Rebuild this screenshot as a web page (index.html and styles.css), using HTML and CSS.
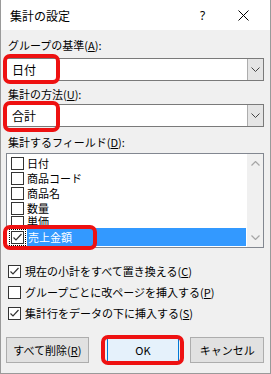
FILE: index.html
```html
<!DOCTYPE html>
<html lang="ja">
<head>
	<meta charset="UTF-8">
	<meta name="viewport" content="width=device-width, initial-scale=1.0">
	<title>集計の設定</title>
	<link rel="stylesheet" href="styles.css">
</head>
<body>

	<div class="window">
		<!-- Title bar -->
		<div class="titlebar">
			<span class="title">集計の設定</span>
			<span class="help">?</span>
			<span class="close">
				<svg width="11" height="11" viewBox="0 0 11 11"><path d="M0.5 0.5 L10.5 10.5 M10.5 0.5 L0.5 10.5" stroke="#000" stroke-width="1"/></svg>
			</span>
		</div>

		<div class="content">
			<label class="label first">グループの基準(<u>A</u>):</label>
			<div class="combo">
				<span class="combo-value">日付</span>
				<span class="combo-btn"><svg width="9" height="5" viewBox="0 0 9 5"><path d="M0.5 0.5 L4.5 4.5 L8.5 0.5" fill="none" stroke="#444" stroke-width="1"/></svg></span>
			</div>

			<label class="label second">集計の方法(<u>U</u>):</label>
			<div class="combo">
				<span class="combo-value">合計</span>
				<span class="combo-btn"><svg width="9" height="5" viewBox="0 0 9 5"><path d="M0.5 0.5 L4.5 4.5 L8.5 0.5" fill="none" stroke="#444" stroke-width="1"/></svg></span>
			</div>

			<label class="label third">集計するフィールド(<u>D</u>):</label>
			<div class="listbox">
				<div class="list-items">
					<div class="list-row"><span class="box"></span>日付</div>
					<div class="list-row"><span class="box"></span>商品コード</div>
					<div class="list-row"><span class="box"></span>商品名</div>
					<div class="list-row"><span class="box"></span>数量</div>
					<div class="list-row clipped"><span class="box"></span>単価</div>
					<div class="list-row selected"><span class="box checked focus"><svg width="11" height="11" viewBox="0 0 11 11"><path d="M1.5 5.5 L4 8 L9.5 2" fill="none" stroke="#333" stroke-width="1.2"/></svg></span><span class="sel-text">売上金額</span></div>
				</div>
				<div class="scrollbar">
					<svg width="9" height="5" viewBox="0 0 9 5"><path d="M0.5 4.5 L4.5 0.5 L8.5 4.5" fill="none" stroke="#a6a6a6" stroke-width="1.2"/></svg>
					<svg width="9" height="5" viewBox="0 0 9 5"><path d="M0.5 0.5 L4.5 4.5 L8.5 0.5" fill="none" stroke="#a6a6a6" stroke-width="1.2"/></svg>
				</div>
			</div>

			<div class="options">
				<div class="option"><span class="box checked"><svg width="11" height="11" viewBox="0 0 11 11"><path d="M1.5 5.5 L4 8 L9.5 2" fill="none" stroke="#333" stroke-width="1.2"/></svg></span>現在の小計をすべて置き換える(<u>C</u>)</div>
				<div class="option"><span class="box"></span>グループごとに改ページを挿入する(<u>P</u>)</div>
				<div class="option"><span class="box checked"><svg width="11" height="11" viewBox="0 0 11 11"><path d="M1.5 5.5 L4 8 L9.5 2" fill="none" stroke="#333" stroke-width="1.2"/></svg></span>集計行をデータの下に挿入する(<u>S</u>)</div>
			</div>

			<div class="buttons">
				<button class="btn btn-clear">すべて削除(<u>R</u>)</button>
				<button class="btn btn-ok">OK</button>
				<button class="btn btn-cancel">キャンセル</button>
			</div>
		</div>

		<!-- Red highlight marks drawn over the dialog -->
		<div class="mark mark-group"></div>
		<div class="mark mark-method"></div>
		<div class="mark mark-field"></div>
		<div class="mark mark-ok"></div>
	</div>

</body>
</html>
```

FILE: styles.css
```css
body {
	margin: 0;
	font-family: "Noto Sans CJK JP", "Noto Sans", sans-serif;
	font-size: 11px;
	color: #000;
}
.window {
	position: relative;
	width: 269px;
	height: 373px;
	background: #f0f0f0;
	border: 1px solid #9a9a9a;
	border-top: none;
	overflow: hidden;
}
.titlebar {
	height: 30px;
	background: #fff;
	display: flex;
	align-items: center;
}
.title {
	font-size: 12px;
	margin-left: 9px;
	flex: 1;
}
.help {
	font-size: 12px;
	width: 14px;
	margin-right: 24px;
	font-family: "Noto Sans", sans-serif;
}
.close {
	display: flex;
	margin-right: 21px;
}
.content {
	padding: 0 6px 0 5px;
	display: flex;
	flex-direction: column;
}
.label {
	display: block;
	line-height: 16px;
	padding-left: 2px;
	margin-bottom: 5px;
}
.label.first {
	margin-top: 7px;
}
.label.second {
	margin-top: 5px;
	margin-bottom: 2px;
}
.label.third {
	margin-top: 7px;
	margin-bottom: 3px;
}
u {
	text-decoration: underline;
	text-underline-offset: 1px;
}
.combo {
	height: 21px;
	border: 1px solid #7a7a7a;
	background: #fff;
	display: flex;
}
.combo-value {
	flex: 1;
	line-height: 21px;
	padding-left: 5px;
	font-size: 12px;
}
.combo-btn {
	width: 15px;
	background: #e5e5e5;
	border-left: 1px solid #adadad;
	display: flex;
	align-items: center;
	justify-content: center;
}
.listbox {
	height: 93px;
	border: 1px solid #828790;
	background: #fff;
	display: flex;
}
.list-items {
	flex: 1;
	padding: 2px 1px 0 4px;
	overflow: hidden;
}
.list-row {
	height: 15px;
	line-height: 15px;
	display: flex;
	align-items: center;
	white-space: nowrap;
}
.list-row .box {
	margin-right: 3px;
}
.list-row.clipped {
	height: 10px;
	line-height: 10px;
	align-items: flex-start;
	overflow: hidden;
}
.list-row.selected {
	height: 18px;
	margin-top: 2px;
}
.sel-text {
	flex: 1;
	background: #3399ff;
	color: #fff;
	height: 18px;
	line-height: 18px;
	padding-left: 1px;
}
.box {
	width: 11px;
	height: 11px;
	border: 1px solid #333;
	background: #fff;
	display: inline-flex;
	flex-shrink: 0;
}
.box.focus {
	outline: 1px dotted #000;
	outline-offset: 1px;
}
.scrollbar {
	width: 16px;
	background: #f0f0f0;
	display: flex;
	flex-direction: column;
	align-items: center;
	justify-content: space-between;
	padding: 7px 0;
}
.options {
	margin-top: 16px;
	display: flex;
	flex-direction: column;
	gap: 7px;
	padding-left: 2px;
}
.option {
	display: flex;
	align-items: center;
	height: 14px;
	white-space: nowrap;
}
.option .box {
	margin-right: 4px;
}
.buttons {
	margin-top: 17px;
	display: flex;
	justify-content: space-between;
}
.btn {
	height: 26px;
	font-family: inherit;
	font-size: 11px;
	background: #e1e1e1;
	border: 1px solid #adadad;
	padding: 0;
	color: #000;
}
.btn-clear {
	width: 83px;
}
.btn-ok {
	width: 73px;
	margin-left: 18px;
	background: #e5f1fb;
	border-color: #0078d7;
}
.btn-cancel {
	width: 74px;
	margin-left: 11px;
}
.mark {
	position: absolute;
	border: 4px solid #ee1111;
	border-radius: 7px;
	box-sizing: border-box;
}
.mark-group {
	left: 2px;
	top: 54px;
	width: 57px;
	height: 30px;
}
.mark-method {
	left: 2px;
	top: 101px;
	width: 57px;
	height: 31px;
}
.mark-field {
	left: 2px;
	top: 225px;
	width: 94px;
	height: 25px;
}
.mark-ok {
	left: 100px;
	top: 335px;
	width: 83px;
	height: 30px;
}
```
